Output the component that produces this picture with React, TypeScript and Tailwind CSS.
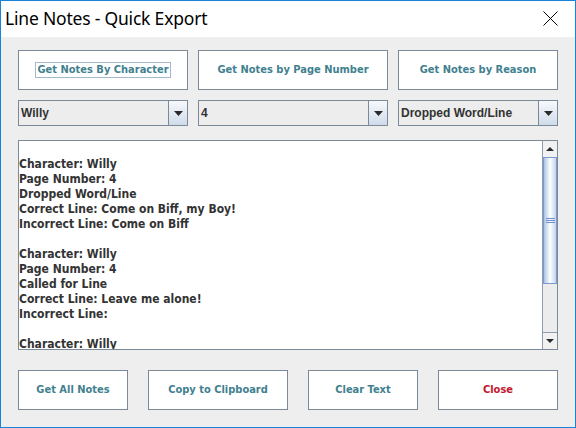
import React from "react";

const lines = [
  "",
  "Character: Willy",
  "Page Number: 4",
  "Dropped Word/Line",
  "Correct Line: Come on Biff, my Boy!",
  "Incorrect Line: Come on Biff",
  "",
  "Character: Willy",
  "Page Number: 4",
  "Called for Line",
  "Correct Line: Leave me alone!",
  "Incorrect Line:",
  "",
  "Character: Willy",
  "Page Number: 4",
];

const btn =
  "bg-white border border-[#7a8a99] flex items-center justify-center text-[11px] font-bold font-['DejaVu_Sans_Condensed','DejaVu_Sans',sans-serif] font-stretch-condensed";

function DownTri() {
  return (
    <svg width="9" height="5" viewBox="0 0 9 5">
      <polygon points="0,0 9,0 4.5,5" fill="#2b2b2b" />
    </svg>
  );
}

function Combo({ value }: { value: string }) {
  return (
    <div className="flex h-[26px] border border-[#7a8a99] bg-[#ededed]">
      <div className="flex-1 flex items-center pl-[2px] text-[12px] font-bold text-[#333333] font-['Liberation_Sans',Arial,sans-serif]">
        {value}
      </div>
      <div className="w-[19px] border-l border-[#7a8a99] flex items-center justify-center bg-gradient-to-b from-[#f7f9fc] to-[#d0dbea] pt-[1px]">
        <DownTri />
      </div>
    </div>
  );
}

export default function App() {
  return (
    <div className="w-[576px] h-[428px] border border-[#1883d7] bg-[#eeeeee] flex flex-col overflow-hidden">
      <div className="h-[36px] shrink-0 bg-white flex items-center justify-between pl-[4px] pr-[17px]">
        <span className="text-[17.5px] leading-none text-black font-['Noto_Sans',sans-serif] tracking-[-0.2px] pb-[1px]">
          Line Notes - Quick Export
        </span>
        <svg width="15" height="15" viewBox="0 0 15 15" className="mb-[1px]">
          <path d="M0.5 0.5 L14.5 14.5 M14.5 0.5 L0.5 14.5" stroke="#000" strokeWidth="1" />
        </svg>
      </div>
      <div className="flex flex-col pl-[17px] pt-[13px]">
        <div className="grid grid-cols-[170px_190px_160px] gap-x-[10px] h-[40px]">
          <div className={btn + " text-[#41808f]"}>
            <span className="border border-[#a5b8cb] px-[1px] leading-[14px]">Get Notes By Character</span>
          </div>
          <div className={btn + " text-[#41808f]"}>Get Notes by Page Number</div>
          <div className={btn + " text-[#41808f]"}>Get Notes by Reason</div>
        </div>
        <div className="grid grid-cols-[170px_190px_160px] gap-x-[10px] mt-[10px]">
          <Combo value="Willy" />
          <Combo value="4" />
          <Combo value="Dropped Word/Line" />
        </div>
        <div className="mt-[14px] w-[540px] h-[210px] border border-[#7a8a99] bg-white flex overflow-hidden">
          <div className="flex-1 overflow-hidden pt-[1px] text-[12px] font-bold text-[#333333] font-['DejaVu_Sans_Condensed','DejaVu_Sans',sans-serif] font-stretch-condensed">
            {lines.map((l, i) => (
              <div key={i} className="h-[15px] leading-[15px] whitespace-pre">
                {l}
              </div>
            ))}
          </div>
          <div className="w-[15px] border-l border-[#8f9cac] bg-[#eeeeee] flex flex-col">
            <div className="h-[16px] flex items-center justify-center bg-[#f1f1f1]">
              <svg width="8" height="4" viewBox="0 0 8 4">
                <polygon points="0,4 8,4 4,0" fill="#2b2b2b" />
              </svg>
            </div>
            <div className="h-[127px] border border-[#7d9ad0] bg-gradient-to-r from-[#aac3e3] via-[#ffffff] to-[#c3d5ec] flex flex-col items-center justify-center gap-[1px]">
              <div className="w-[9px] h-[1px] bg-[#6f90d0]" />
              <div className="w-[9px] h-[1px] bg-[#6f90d0]" />
              <div className="w-[9px] h-[1px] bg-[#6f90d0]" />
            </div>
            <div className="flex-1 bg-[#ececec]" />
            <div className="h-[17px] flex items-center justify-center bg-[#f1f1f1] border-t border-[#8f9cac]">
              <svg width="8" height="4" viewBox="0 0 8 4">
                <polygon points="0,0 8,0 4,4" fill="#2b2b2b" />
              </svg>
            </div>
          </div>
        </div>
        <div className="mt-[20px] flex gap-[20px] h-[40px]">
          <div className={btn + " w-[110px] text-[#41808f]"}>Get All Notes</div>
          <div className={btn + " w-[140px] text-[#41808f]"}>Copy to Clipboard</div>
          <div className={btn + " w-[110px] text-[#41808f]"}>Clear Text</div>
          <div className={btn + " w-[120px] text-[#c4172f]"}>Close</div>
        </div>
      </div>
    </div>
  );
}
